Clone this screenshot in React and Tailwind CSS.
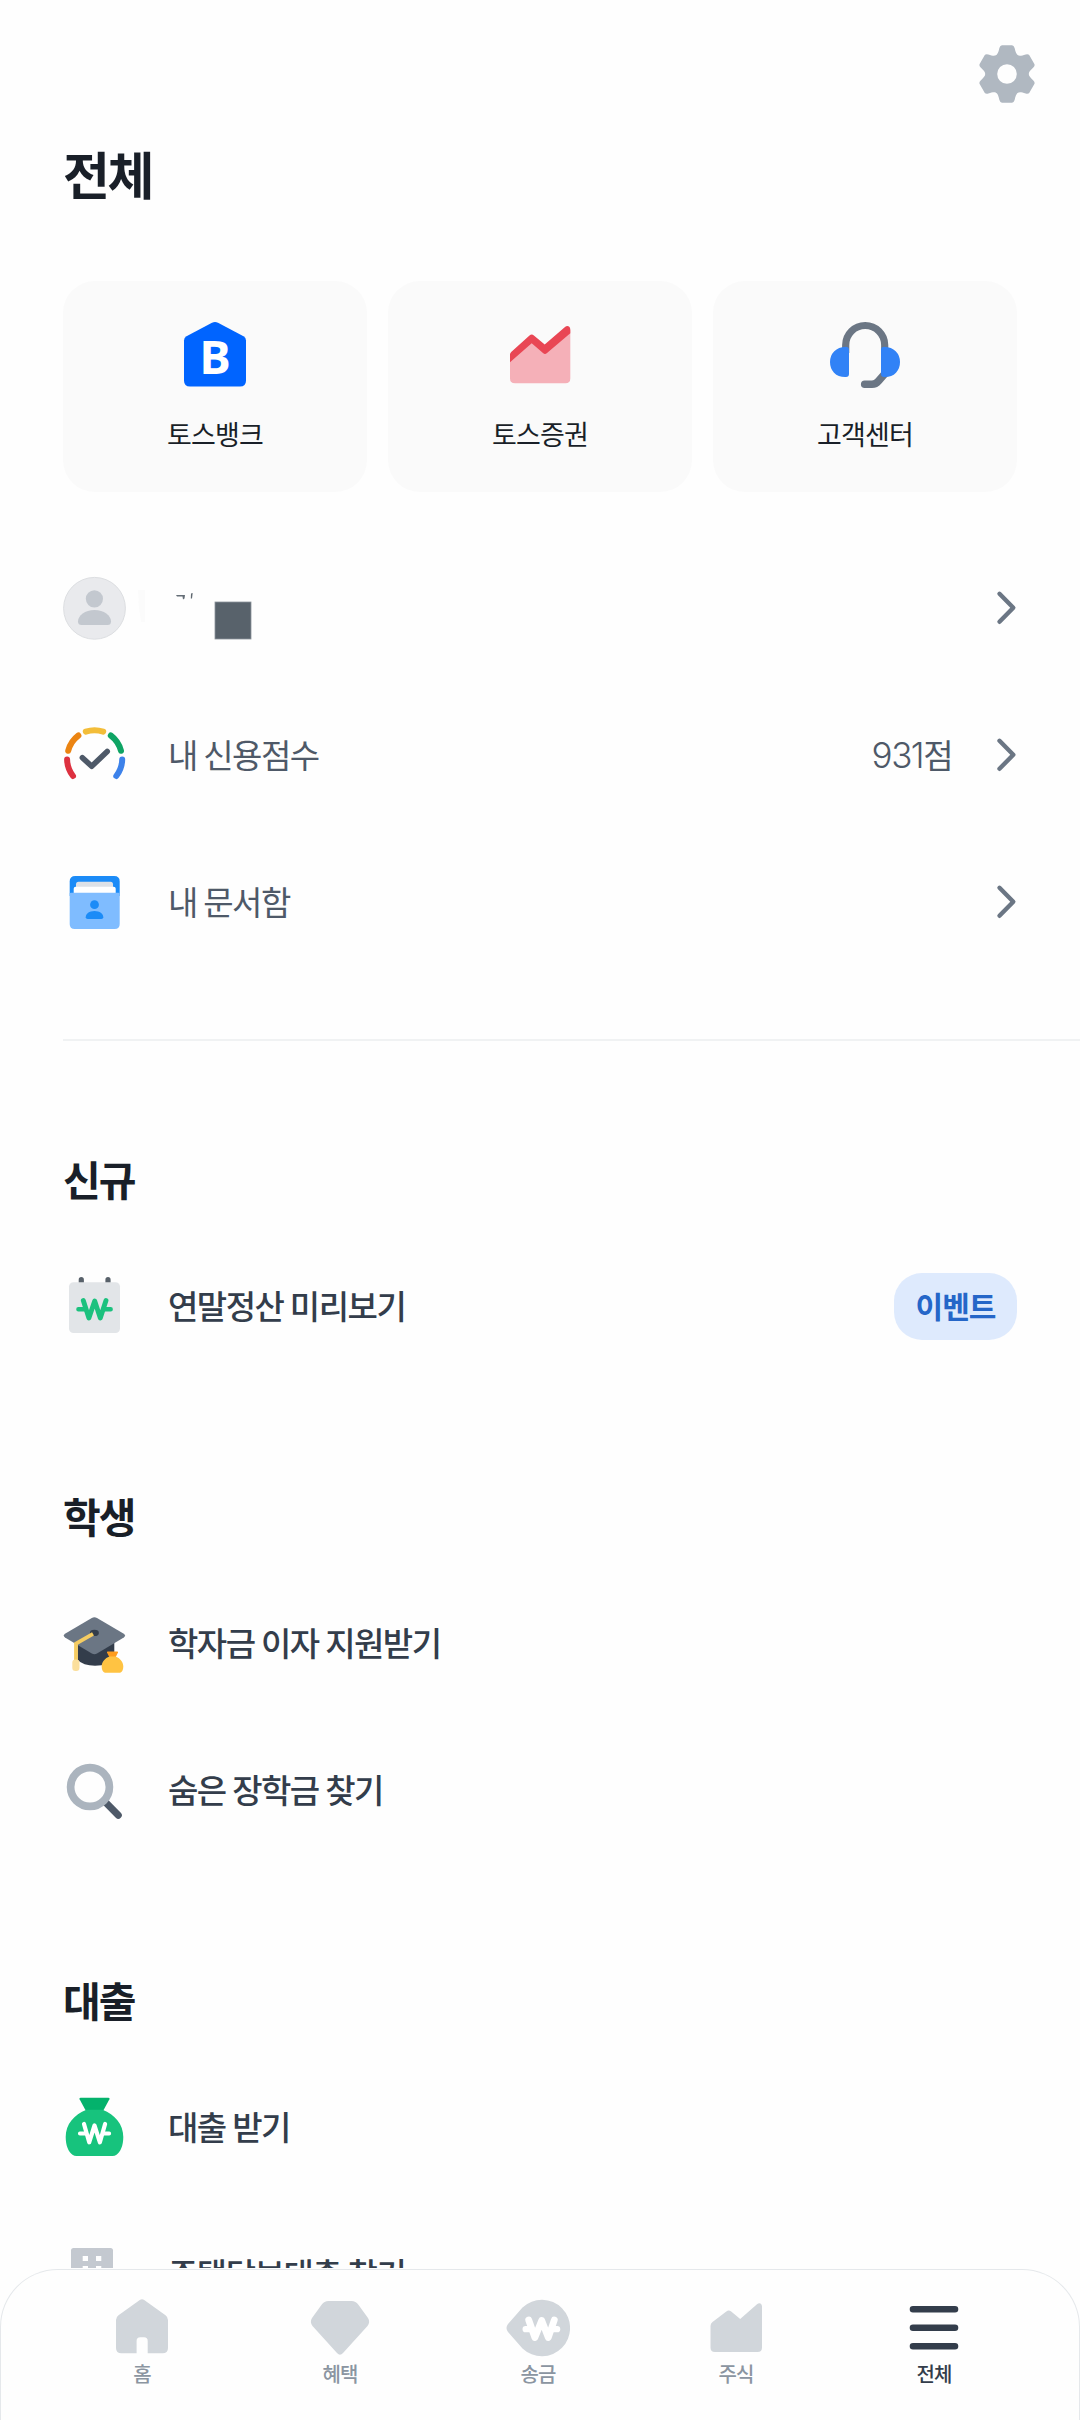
import { clsx } from "clsx"

// gear outline: one tooth and the valley after it, turned six times around 0,0
const TOOTH = [
  ["L", 5, -28.7],
  ["Q", 6.8, -28.7, 7.6, -26],
  ["C", 9.4, -18, 10.9, -17.1, 18.7, -19.6],
  ["Q", 21.4, -20.2, 22.35, -18.7],
]

function gearPath() {
  let d = "M-5 -28.7"
  for (let k = 0; k < 6; k++) {
    const cos = Math.cos((k * Math.PI) / 3)
    const sin = Math.sin((k * Math.PI) / 3)
    TOOTH.forEach(([cmd, ...pts]) => {
      d += cmd
      for (let i = 0; i < pts.length; i += 2) {
        const x = pts[i] * cos - pts[i + 1] * sin
        const y = pts[i] * sin + pts[i + 1] * cos
        d += `${x.toFixed(2)} ${y.toFixed(2)} `
      }
    })
  }
  return d + "Z M9.8 0A9.8 9.8 0 1 0 -9.8 0A9.8 9.8 0 1 0 9.8 0Z"
}

const GEAR = gearPath()

function GearIcon() {
  return (
    <svg viewBox="-32 -32 64 64" className="size-16">
      <path d={GEAR} fill="#b0b8c1" fillRule="evenodd" />
    </svg>
  )
}

function BankIcon() {
  return (
    <svg viewBox="0 0 72 72" className="size-18">
      <path
        d="M33 3.7Q36 2.2 39 3.7L64.5 17.3Q67 18.8 67 21.5V61.5Q67 67.5 61 67.5H11Q5 67.5 5 61.5V21.5Q5 18.8 7.5 17.3Z"
        fill="#0064ff"
      />
      <text x="36" y="54.6" textAnchor="middle" fontSize="47" className="fill-white font-['Open_Sans',sans-serif] font-bold">
        B
      </text>
    </svg>
  )
}

function StockIcon() {
  return (
    <svg viewBox="0 0 72 72" className="size-18">
      <path d="M6 40L27.7 21L41 32.5L66.3 11V59.5Q66.3 64.3 61.5 64.3H11Q6 64.3 6 59.5Z" fill="#f5b0b8" />
      <path
        d="M6 43.2V35.5Q6 34 7.2 33L25.5 16.4Q27.7 14.6 29.9 16.4L40.7 25.4L61 8Q63.2 6.3 65 7.6Q66.3 8.6 66.3 10.5V14.2L43 34Q41 35.9 39 34L27.7 24.3Z"
        fill="#e94654"
      />
    </svg>
  )
}

function HeadsetIcon() {
  return (
    <svg viewBox="0 0 72 72" className="size-18" fill="none">
      <path d="M16.7 34V26A19.5 19.5 0 0 1 55.7 26V34" stroke="#6b7684" strokeWidth="7.2" />
      <path d="M60 50L49.5 62Q46.8 65.2 43 65.2H35.7" stroke="#6b7684" strokeWidth="7.6" strokeLinecap="round" />
      <path d="M20 31V55Q20 58 17 58Q9.5 58.3 5 53.7Q1 49.5 1 43Q1 36.5 5.3 32.2Q9.500 28 16.5 27.7Q20 27.7 20 31Z" fill="#3182f6" />
      <path d="M52 31V55Q52 58 55 58Q62.5 58.3 67 53.7Q71 49.5 71 43Q71 36.5 66.7 32.2Q62.500 28 55.5 27.7Q52 27.7 52 31Z" fill="#3182f6" />
    </svg>
  )
}

function AvatarIcon() {
  return (
    <svg viewBox="0 0 64 64" className="size-16">
      <circle cx="31.5" cy="32.3" r="30.9" fill="#e9eaed" stroke="#dcdee1" />
      <circle cx="31.4" cy="22.8" r="8.6" fill="#c3c8cf" />
      <path d="M15 45.5C15 39.5 22 34 31.5 34S48 39.5 48 45.5Q48 49 44.5 49H18.5Q15 49 15 45.5Z" fill="#c3c8cf" />
    </svg>
  )
}

function CreditIcon() {
  return (
    <svg viewBox="0 0 64 64" className="size-16" fill="none" strokeWidth="6" strokeLinecap="round" strokeLinejoin="round">
      <path d="M10 53A27.8 27.8 0 0 1 4.1 36.5" stroke="#dd3140" />
      <path d="M5.2 27.8A27.8 27.8 0 0 1 15.4 12.5" stroke="#eb8412" />
      <path d="M22.8 8.6A27.8 27.8 0 0 1 40.2 8.6" stroke="#f3bd39" />
      <path d="M47.8 12.5A27.8 27.8 0 0 1 58 27.8" stroke="#0fa464" />
      <path d="M59.2 36.5A27.8 27.8 0 0 1 53.3 53" stroke="#3d82ea" />
      <path d="M19.4 34.7L28.7 43.3L44.2 28.5" stroke="#4e5968" strokeWidth="5.6" />
    </svg>
  )
}

function DocsIcon() {
  return (
    <svg viewBox="0 0 64 64" className="size-16">
      <path d="M6.7 26V11.5Q6.7 6 12.2 6H51.2Q56.7 6 56.7 11.5V26Z" fill="#1b8bf7" />
      <path d="M13 24V14.2Q13 11.7 15.5 11.7H47.5Q50 11.7 50 14.2V24Z" fill="#dde1e7" />
      <path d="M10.7 24V18.7Q10.7 16.7 12.7 16.7H50.7Q52.7 16.7 52.7 18.7V24Z" fill="#fff" />
      <path d="M6.7 23.5Q6.7 22.7 8 22.7H55.5Q56.7 22.7 56.7 23.5V54Q56.7 59 51.7 59H11.7Q6.7 59 6.7 54Z" fill="#7fbcff" />
      <circle cx="31.5" cy="34.7" r="4.4" fill="#1b8bf7" />
      <path d="M22.7 47.3C22.7 43.8 26.3 41 31.5 41S40.3 43.8 40.3 47.3Q40.3 49 38.3 49H24.7Q22.7 49 22.7 47.3Z" fill="#1b8bf7" />
    </svg>
  )
}

function CalendarIcon() {
  return (
    <svg viewBox="0 0 64 64" className="size-16" fill="none" strokeLinecap="round" strokeLinejoin="round">
      <path d="M18.3 5.7V12M45 5.7V12" stroke="#58616a" strokeWidth="5.2" />
      <rect x="6" y="8.3" width="51" height="50.7" rx="4.5" fill="#e2e5e8" />
      <path d="M20.3 26.5L25.9 44L31.7 27L37.3 44L43 26.5" stroke="#1cc17e" strokeWidth="4.9" />
      <path d="M15.4 35.2H22M41 35.2H47.7" stroke="#1cc17e" strokeWidth="4.4" />
    </svg>
  )
}

function GraduationIcon() {
  return (
    <svg viewBox="0 0 64 64" className="size-16">
      <path d="M14.7 30H51.3V46Q46 54.7 32 54.7Q20 54.7 14.7 49Z" fill="#333d4b" />
      <path d="M28.8 7Q31.4 5.6 34 7L60.8 22.8Q63.3 24.6 60.8 26.4L34 42.4Q31.4 43.9 28.8 42.4L2 26.4Q-.5 24.6 2 22.8Z" fill="#6b7684" />
      <ellipse cx="31.4" cy="21.9" rx="4.5" ry="3.1" fill="#333d4b" />
      <path d="M30 22.8L13 32.6V50" fill="none" stroke="#f5cc62" strokeWidth="3.8" />
      <rect x="9.3" y="48.5" width="7.2" height="11.5" rx="3.2" fill="#fbdf9c" />
      <path d="M44 41.5Q43.5 40.5 45 40.5H54Q55.4 40.5 55 41.5L52.5 46.5H46.5Z" fill="#ff9c1c" />
      <path d="M46.5 45.5H52.5C57 47 60.3 51 60.3 55.5C60.3 58.5 59.3 60.5 58 61.3Q57.3 61.8 56 61.8H43Q41.8 61.8 41 61.3C39.7 60.5 38.7 58.5 38.7 55.5C38.7 51 42 47 46.5 45.5Z" fill="#ffc342" />
    </svg>
  )
}

function SearchIcon() {
  return (
    <svg viewBox="0 0 64 64" className="size-16" fill="none">
      <path d="M42.5 44.2L55.3 57.3" stroke="#4e5968" strokeWidth="7" strokeLinecap="round" />
      <circle cx="27" cy="29" r="19.4" stroke="#abb4be" strokeWidth="7.7" />
    </svg>
  )
}

function MoneyBagIcon() {
  return (
    <svg viewBox="0 0 64 64" className="size-16">
      <path d="M16.6 4.2Q15.8 2.7 17.5 2.7H45.5Q47.2 2.7 46.4 4.2L39.5 17H23.5Z" fill="#04b26c" />
      <path d="M23.5 14.8H39.5C52 19.5 60.3 29.5 60.3 42C60.3 50.5 57.5 57 53.5 59.8Q51.8 61 49.5 61H13.5Q11.2 61 9.5 59.8C5.5 57 2.7 50.5 2.7 42C2.7 29.5 11 19.5 23.5 14.8Z" fill="#17c37d" />
      <g fill="none" stroke="#fff" strokeLinecap="round" strokeLinejoin="round">
        <path d="M21 29L26.2 47.3L31.5 30.5L36.9 47.3L42.1 29" strokeWidth="4.2" />
        <path d="M16.9 38.5H22.5M40.5 38.5H46.2" strokeWidth="3.9" />
      </g>
    </svg>
  )
}

function BuildingIcon() {
  return (
    <svg viewBox="0 0 64 64" className="size-16">
      <rect x="8" y="6" width="42" height="53" rx="2.5" fill="#c4c9d0" />
      <path d="M19.7 14H25V19H19.7ZM33 14H38.3V19H33ZM19.7 24H25V29H19.7ZM33 24H38.3V29H33Z" fill="#fff" />
    </svg>
  )
}

// what is left of the masked account name
function MaskedName() {
  return (
    <svg viewBox="0 0 120 64" className="h-16 w-[120px]">
      <path d="M3 14H10V46H6Q3 30 3 14Z" fill="#fbfbfb" />
      <path d="M41 19H50L49.5 22.5L48 23.5L47.500 20.500H42Z" fill="#646d76" />
      <path d="M56 17.5L57.7 17L57 22.5H55.8Z" fill="#5f6870" />
      <rect x="80" y="26" width="36" height="37" fill="#58626b" stroke="#8d959c" strokeWidth=".8" />
    </svg>
  )
}

function Chevron() {
  return (
    <svg viewBox="0 0 24 40" className="ml-[41px] h-10 w-6" fill="none">
      <path d="M6.5 5.8L20.3 19.7L6.5 33.8" stroke="#6b7684" strokeWidth="4.4" strokeLinecap="round" strokeLinejoin="round" />
    </svg>
  )
}

function HomeTab() {
  return (
    <svg viewBox="0 0 64 64" className="size-16">
      <path
        d="M29.8 4Q32 2.3 34.2 4L55.5 19.2Q58 21 58 24V52Q58 57.3 52.5 57.3H37.7V45Q37.7 41.3 34 41.3H30.3Q26.6 41.3 26.6 45V57.3H11.5Q6 57.3 6 52V24Q6 21 8.5 19.2Z"
        fill="#d1d6db"
      />
    </svg>
  )
}

function BenefitTab() {
  return (
    <svg viewBox="0 0 64 64" className="size-16">
      <path
        d="M20.5 5H43.5Q47.8 5 50.2 8.5L60 22Q62.5 26 59.5 30L35 57Q32 60.5 29 57L4.5 30Q1.5 26 4 22L13.8 8.5Q16.2 5 20.5 5Z"
        fill="#d1d6db"
      />
    </svg>
  )
}

function SendTab() {
  return (
    <svg viewBox="0 0 64 64" className="size-16">
      <path d="M16.5 11.5A28.2 28.2 0 1 1 16.5 52.5L2 36Q-1 32 2 28Z" fill="#d1d6db" />
      <g fill="none" stroke="#fff" strokeLinecap="round" strokeLinejoin="round" strokeWidth="6.8">
        <path d="M22.7 24L28.9 41.5L35.7 24.5L42.3 41.5L48.3 24" />
        <path d="M19.6 33.2H24M47 33.2H51.2" strokeWidth="6.2" />
      </g>
    </svg>
  )
}

function StocksTab() {
  return (
    <svg viewBox="0 0 64 64" className="size-16">
      <path
        d="M22.3 15.5Q24.7 13.3 27.2 15.5L36.2 23L53 8.2Q54.8 6.7 56.5 7.5Q58 8.3 58 10.5V51.5Q58 56 53.5 56H11Q6.5 56 6.5 51.5V30Q6.5 27.5 8.5 26Z"
        fill="#d1d6db"
      />
    </svg>
  )
}

function MenuTab() {
  return (
    <svg viewBox="0 0 64 64" className="size-16">
      <path d="M11 13.3H53M11 31.7H53M11 50.3H53" stroke="#333d4b" strokeWidth="6.6" strokeLinecap="round" />
    </svg>
  )
}

const shortcuts = [
  { label: "토스뱅크", Icon: BankIcon },
  { label: "토스증권", Icon: StockIcon },
  { label: "고객센터", Icon: HeadsetIcon },
]

const sections = [
  { title: "신규", items: [{ label: "연말정산 미리보기", Icon: CalendarIcon, badge: "이벤트" }] },
  {
    title: "학생",
    items: [
      { label: "학자금 이자 지원받기", Icon: GraduationIcon },
      { label: "숨은 장학금 찾기", Icon: SearchIcon },
    ],
  },
  {
    title: "대출",
    items: [
      { label: "대출 받기", Icon: MoneyBagIcon },
      { label: "주택담보대출 찾기", Icon: BuildingIcon },
    ],
  },
]

const tabs = [
  { label: "홈", Icon: HomeTab },
  { label: "혜택", Icon: BenefitTab },
  { label: "송금", Icon: SendTab },
  { label: "주식", Icon: StocksTab },
  { label: "전체", Icon: MenuTab, active: true },
]

function AccountRow({ Icon, label, score }) {
  return (
    <li className="flex h-[147px] items-center text-[33px] tracking-[-1.5px] text-[#4e5968]">
      <Icon />
      {label ? <span className="ml-[41px] [word-spacing:0.5px]">{label}</span> : <span className="ml-2"><MaskedName /></span>}
      <span className="ml-auto">
        {score && (
          <>
            <span className="font-['Inter',sans-serif] text-[35px] font-light">{score}</span>점
          </>
        )}
      </span>
      <Chevron />
    </li>
  )
}

function ServiceRow({ Icon, label, badge }) {
  return (
    <li className="flex h-[147px] shrink-0 items-center">
      <Icon />
      <span className="ml-[41px] text-[33px] font-medium tracking-[-1.5px] text-[#333d4b] [word-spacing:0.5px]">{label}</span>
      {badge && (
        <span className="ml-auto flex h-[67px] w-[123px] items-center justify-center rounded-[28px] bg-[#deeafd] pb-0.5 text-[30px] font-bold tracking-[-1px] text-[#2566c8]">
          {badge}
        </span>
      )}
    </li>
  )
}

export default function App() {
  return (
    <div className="flex h-[2420px] w-[1080px] flex-col overflow-hidden bg-[#fefefe] font-['Noto_Sans_CJK_KR',sans-serif]">
      <main className="h-[2268px] shrink-0 overflow-hidden">
        <header className="flex h-[106px] items-end justify-end pr-[41.5px]">
          <button aria-label="설정">
            <GearIcon />
          </button>
        </header>
        <h1 className="mt-[32px] h-[70px] pl-[63px] text-[51px] leading-[70px] font-bold tracking-[-2.5px] text-[#191f28]">전체</h1>

        <div className="mt-[73px] grid grid-cols-3 gap-[21px] px-[63px]">
          {shortcuts.map(({ label, Icon }) => (
            <button key={label} className="flex h-[211px] flex-col items-center rounded-[32px] bg-[#fafafa] pt-[38px]">
              <Icon />
              <span className="mt-[23px] text-[27px] leading-10 tracking-[-0.8px] text-[#191f28]">{label}</span>
            </button>
          ))}
        </div>

        <ul className="mt-[42.5px] px-[63px]">
          <AccountRow Icon={AvatarIcon} />
          <AccountRow Icon={CreditIcon} label="내 신용점수" score={931} />
          <AccountRow Icon={DocsIcon} label="내 문서함" />
        </ul>

        <hr className="mt-[63.5px] mb-[1.5px] ml-[63px] border-t-2 border-[#f0f2f3]" />

        {sections.map((section) => (
          <section key={section.title} className="px-[63px]">
            <h2 className="h-[190px] pt-[103px] text-[41px] leading-[64px] font-bold tracking-[-2px] text-[#191f28]">{section.title}</h2>
            <ul>
              {section.items.map((item) => (
                <ServiceRow key={item.label} {...item} />
              ))}
            </ul>
          </section>
        ))}
      </main>

      <nav className="mt-px flex h-[151px] shrink-0 rounded-t-[58px] border border-b-0 border-[#e5e8eb] pt-[26px] pr-[46px] pl-[42px]">
        {tabs.map(({ label, Icon, active }) => (
          <a key={label} className="flex flex-1 flex-col items-center">
            <Icon />
            <span
              className={clsx(
                "mt-[2px] text-[20px] leading-6 font-medium tracking-[-0.9px]",
                active ? "text-[#333d4b]" : "text-[#8b95a1]",
              )}
            >
              {label}
            </span>
          </a>
        ))}
      </nav>
    </div>
  )
}
